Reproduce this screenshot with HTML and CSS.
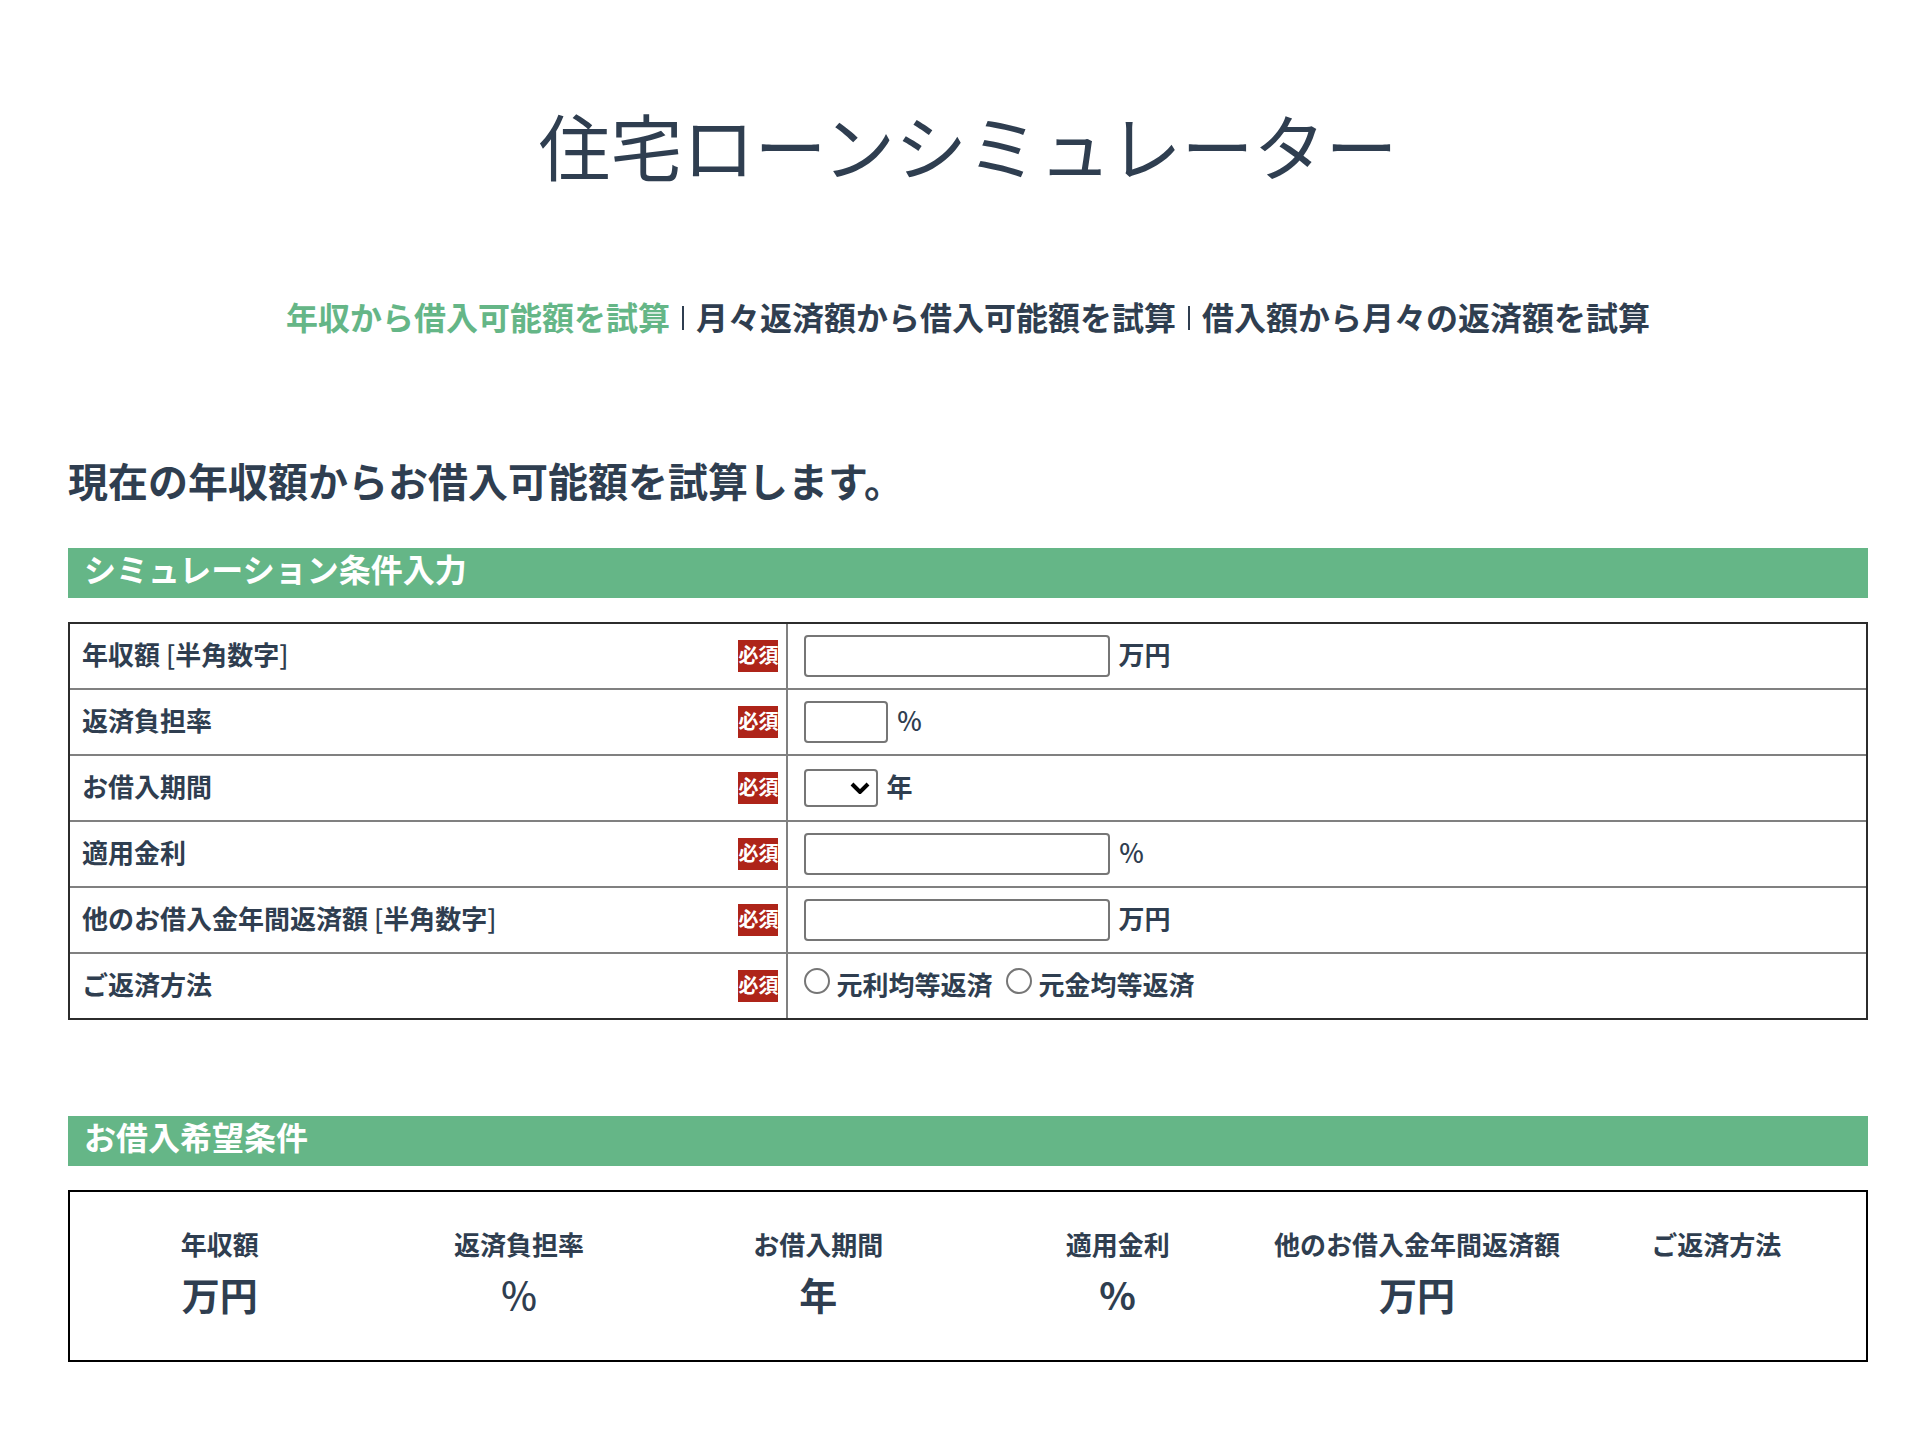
FILE: index.html
```html
<!DOCTYPE html>
<html lang="ja">
<head>
<meta charset="utf-8">
<meta name="viewport" content="width=device-width, initial-scale=1">
<title>住宅ローンシミュレーター</title>
<link rel="stylesheet" href="styles.css">
</head>
<body>
<div class="page">
  <h1 class="title">住宅ローンシミュレーター</h1>
  <nav class="tabs">
    <a class="tab tab-active" href="#income">年収から借入可能額を試算</a>
    <span class="tab-sep"></span>
    <a class="tab" href="#monthly">月々返済額から借入可能額を試算</a>
    <span class="tab-sep"></span>
    <a class="tab" href="#amount">借入額から月々の返済額を試算</a>
  </nav>
  <main>
    <h2 class="lead">現在の年収額からお借入可能額を試算します。</h2>
    <form>
      <h3 class="band">シミュレーション条件入力</h3>
      <table class="conditions">
        <tbody>
          <tr>
            <th scope="row"><div class="head"><label class="name" for="income">年収額 <span class="light">[</span>半角数字<span class="light">]</span></label><span class="badge">必須</span></div></th>
            <td><div class="field"><input class="text" id="income" type="text"><span class="unit">万円</span></div></td>
          </tr>
          <tr>
            <th scope="row"><div class="head"><label class="name" for="ratio">返済負担率</label><span class="badge">必須</span></div></th>
            <td><div class="field"><input class="text text-short" id="ratio" type="text"><span class="unit light">％</span></div></td>
          </tr>
          <tr>
            <th scope="row"><div class="head"><label class="name" for="period">お借入期間</label><span class="badge">必須</span></div></th>
            <td><div class="field">
              <span class="select-wrap">
                <select class="select" id="period"><option></option></select>
                <svg class="chevron" viewBox="0 0 20 12" aria-hidden="true"><path d="M2 2l8 8 8-8"/></svg>
              </span>
              <span class="unit">年</span>
            </div></td>
          </tr>
          <tr>
            <th scope="row"><div class="head"><label class="name" for="rate">適用金利</label><span class="badge">必須</span></div></th>
            <td><div class="field"><input class="text" id="rate" type="text"><span class="unit light">％</span></div></td>
          </tr>
          <tr>
            <th scope="row"><div class="head"><label class="name" for="other">他のお借入金年間返済額 <span class="light">[</span>半角数字<span class="light">]</span></label><span class="badge">必須</span></div></th>
            <td><div class="field"><input class="text" id="other" type="text"><span class="unit">万円</span></div></td>
          </tr>
          <tr>
            <th scope="row"><div class="head"><span class="name">ご返済方法</span><span class="badge">必須</span></div></th>
            <td><div class="field field-radios">
              <label class="choice"><input class="radio" type="radio" name="method">元利均等返済</label>
              <label class="choice"><input class="radio" type="radio" name="method">元金均等返済</label>
            </div></td>
          </tr>
        </tbody>
      </table>
    </form>
    <section>
      <h3 class="band">お借入希望条件</h3>
      <dl class="summary">
        <div><dt>年収額</dt><dd>万円</dd></div>
        <div><dt>返済負担率</dt><dd class="light">％</dd></div>
        <div><dt>お借入期間</dt><dd>年</dd></div>
        <div><dt>適用金利</dt><dd>%</dd></div>
        <div><dt>他のお借入金年間返済額</dt><dd>万円</dd></div>
        <div><dt>ご返済方法</dt><dd></dd></div>
      </dl>
    </section>
  </main>
</div>
</body>
</html>
```
FILE: styles.css
```css
* { box-sizing: border-box; }

body {
  margin: 0;
  background: #fff;
  color: #2f3e50;
  font-family: "Noto Sans CJK JP", sans-serif;
  font-size: 26px;
  font-weight: 700;
  line-height: 32px;
}

.page { padding: 96px 60px 60px 68px; }

.title {
  margin: 0 0 104px;
  font-size: 72px;
  font-weight: 400;
  line-height: 96px;
  text-align: center;
}

.tabs {
  display: flex;
  flex-wrap: wrap;
  align-items: center;
  justify-content: center;
  gap: 12px;
  margin-bottom: 114px;
  font-size: 32px;
  line-height: 40px;
}
.tab { color: inherit; text-decoration: none; }
.tab-active { color: #65b687; }
.tab-sep { width: 2px; height: 24px; margin-top: 4px; background: #2f3e50; }

.light { font-weight: 500; }

.lead {
  margin: 0 0 38px;
  font-size: 40px;
  line-height: 60px;
}

.band {
  margin: 0 0 24px;
  padding: 0 16px 10px;
  background: #65b687;
  color: #fff;
  font-size: 32px;
  line-height: 40px;
}

.conditions {
  width: 100%;
  margin-bottom: 96px;
  border: 2px solid #2c2c2c;
  border-spacing: 0;
  table-layout: fixed;
}
.conditions th,
.conditions td {
  height: 66px;
  padding: 0;
  border-bottom: 2px solid #808080;
  text-align: left;
}
.conditions th { width: 40%; border-right: 2px solid #808080; }
.conditions tr:last-child > * { height: 64px; border-bottom: 0; }

.head {
  display: flex;
  align-items: center;
  justify-content: space-between;
  padding: 0 8px 0 12px;
}
.name,
.unit { padding-bottom: 4px; }
.badge {
  padding-bottom: 2px;
  background: #ae2419;
  color: #fff;
  font-size: 20px;
  line-height: 30px;
}

.field {
  display: flex;
  align-items: center;
  gap: 8px;
  padding: 0 16px;
}
.field-radios { gap: 14px; }

.text,
.select {
  margin: 0;
  border: 2px solid #767676;
  border-radius: 4px;
  background: #fff;
  color: #000;
  font: inherit;
}
.text { width: 306px; height: 42px; padding: 2px 4px; }
.text-short { width: 84px; }

.select-wrap { display: grid; align-items: center; }
.select {
  grid-area: 1 / 1;
  width: 74px;
  height: 38px;
  appearance: none;
}
.chevron {
  grid-area: 1 / 1;
  justify-self: end;
  width: 20px;
  height: 12px;
  margin-right: 8px;
  fill: none;
  stroke: #000;
  stroke-width: 4;
  pointer-events: none;
}

.choice {
  display: flex;
  align-items: center;
  gap: 6px;
  padding-bottom: 4px;
}
.radio {
  width: 26px;
  height: 26px;
  margin: 0 0 6px;
  border: 2px solid #767676;
  border-radius: 50%;
  background: #fff;
  appearance: none;
}
.radio:checked { background: radial-gradient(#65b687 50%, #fff 55%); }

.summary {
  display: grid;
  grid-template-columns: repeat(6, 1fr);
  margin: 0;
  padding: 36px 0 38px;
  border: 2px solid #000;
  text-align: center;
}
.summary dd {
  margin: 6px 0 0;
  font-size: 38px;
  line-height: 56px;
}
```
